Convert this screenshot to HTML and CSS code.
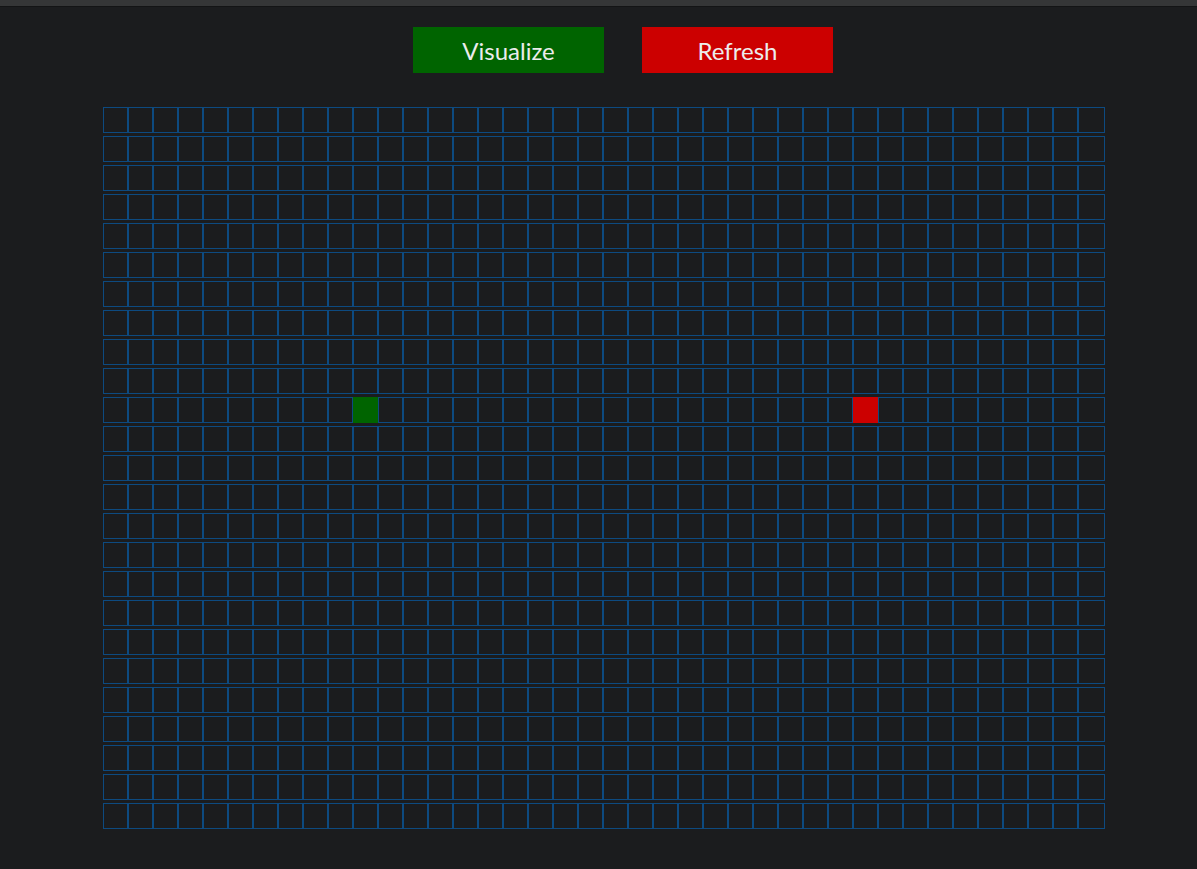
FILE: index.html
```html
<!DOCTYPE html>
<html lang="en">
<head>
<meta charset="utf-8">
<title>Pathfinding Visualizer</title>
<link rel="stylesheet" href="styles.css">
</head>
<body>
<div class="topbar"></div>
<div class="controls">
  <button class="btn btn-visualize">Visualize</button>
  <button class="btn btn-refresh">Refresh</button>
</div>
<div class="grid" id="grid"></div>
<script src="script.js"></script>
</body>
</html>
```
FILE: styles.css
```css
html, body {
  margin: 0;
  padding: 0;
  background: #1b1c1e;
  font-family: "Lato", "Open Sans", sans-serif;
}
.topbar {
  height: 6px;
  background: #353637;
  border-bottom: 1px solid #131415;
}
.controls {
  display: flex;
  gap: 38px;
  padding: 20px 0 0 413px;
}
.btn {
  width: 191px;
  height: 46px;
  border: none;
  margin: 0;
  padding: 0;
  font-family: "Lato", "Open Sans", sans-serif;
  font-size: 24px;
  color: #ececec;
  cursor: pointer;
}
.btn-visualize { background: #006400; }
.btn-refresh { background: #cc0000; }
.grid {
  display: flex;
  flex-direction: column;
  gap: 3px;
  padding: 34px 0 0 103px;
}
.row {
  display: flex;
}
.cell {
  box-sizing: border-box;
  width: 25px;
  height: 26px;
  border: 1px solid #0d4a80;
}
.cell.last {
  width: 27px;
}
.cell.start {
  background: #006400;
  border-color: #006400;
}
.cell.end {
  background: #cc0000;
  border-color: #cc0000;
}
```
FILE: script.js
```js
(function () {
  var grid = document.getElementById('grid');
  for (var r = 0; r < 25; r++) {
    var row = document.createElement('div');
    row.className = 'row';
    for (var c = 0; c < 40; c++) {
      var cell = document.createElement('div');
      cell.className = 'cell';
      if (c === 39) cell.className += ' last';
      if (r === 10 && c === 10) cell.className += ' start';
      if (r === 10 && c === 30) cell.className += ' end';
      row.appendChild(cell);
    }
    grid.appendChild(row);
  }
})();
```
